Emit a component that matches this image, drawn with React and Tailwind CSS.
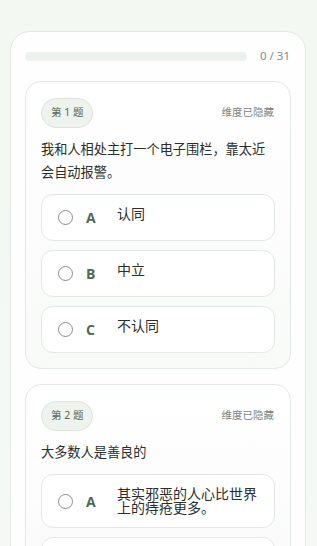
const questions = [
  {
    no: 1,
    text: "我和人相处主打一个电子围栏，靠太近会自动报警。",
    options: [
      { key: "A", label: "认同" },
      { key: "B", label: "中立" },
      { key: "C", label: "不认同" },
    ],
  },
  {
    no: 2,
    text: "大多数人是善良的",
    options: [
      { key: "A", label: "其实邪恶的人心比世界上的痔疮更多。" },
      { key: "B", label: "大多数人还是好的。" },
    ],
  },
];

function Option({ opt }) {
  return (
    <div className="flex items-center rounded-xl border border-[#e2e8e3] bg-white pl-[16px] pr-3 py-[12px]">
      <span className="w-[15px] h-[15px] shrink-0 rounded-full border-[1.5px] border-[#8c8f8d]" />
      <span className="w-[44px] shrink-0 pl-[13px] text-[14px] leading-[21px] font-bold text-[#4d6a53] font-['Open_Sans',sans-serif]">
        {opt.key}
      </span>
      <span className="self-start text-[14px] leading-[14px] text-[#2b2f2c]">
        {opt.label}
      </span>
    </div>
  );
}

function QuestionCard({ q }) {
  return (
    <div className="rounded-2xl border border-[#e3e9e4] bg-gradient-to-b from-white to-[#f8faf8] px-[15px] pt-[16px] pb-[15px]">
      <div className="flex items-center justify-between">
        <span className="h-[30px] px-[9px] flex items-center rounded-full border border-[#dbe5dc] bg-[#eef3ee] text-[10.5px] text-[#566a5b]">
          第 {q.no} 题
        </span>
        <span className="text-[10.5px] text-[#7c867e] pr-[1px]">维度已隐藏</span>
      </div>
      <p className="mt-[10px] text-[13.2px] leading-[23px] text-[#2b2f2c]">{q.text}</p>
      <div className="mt-[10px] flex flex-col gap-[9px]">
        {q.options.map((o) => (
          <Option key={o.key} opt={o} />
        ))}
      </div>
    </div>
  );
}

export default function App() {
  return (
    <div className="h-screen bg-gradient-to-b from-[#f3f8f3] to-[#f5f8f5] px-[10px] pt-[31px] font-['Noto_Sans','Noto_Sans_CJK_SC',sans-serif] overflow-hidden">
      <div className="w-[296px] rounded-[20px] border border-[#e2e8e3] bg-[#fdfefd] px-[14px] pt-[14px] pb-4">
        <div className="flex items-center gap-[13px] h-[20px] mb-[15px]">
          <div className="flex-1 h-[9px] rounded-full bg-[#edf1ee]" />
          <span className="text-[11.5px] text-[#858c87] pr-[1px]">0 / 31</span>
        </div>
        <div className="flex flex-col gap-[15px]">
          {questions.map((q) => (
            <QuestionCard key={q.no} q={q} />
          ))}
        </div>
      </div>
    </div>
  );
}
